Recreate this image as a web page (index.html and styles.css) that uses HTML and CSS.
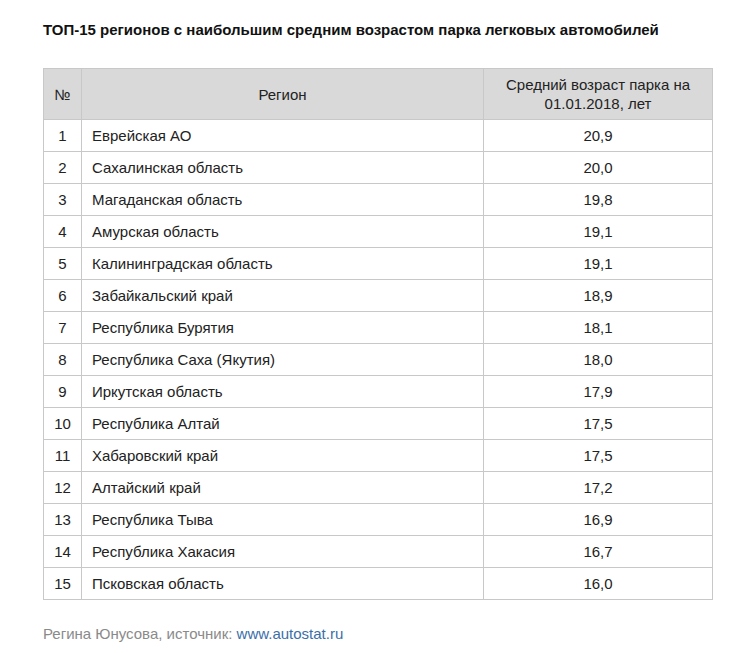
FILE: index.html
```html
<!DOCTYPE html>
<html lang="ru">
<head>
<meta charset="utf-8">
<link rel="stylesheet" href="styles.css">
</head>
<body>
<div class="page">
  <h2 class="title">ТОП-15 регионов с наибольшим средним возрастом парка легковых автомобилей</h2>
  <table class="data">
    <thead>
      <tr>
        <th class="c-num">№</th>
        <th class="c-reg">Регион</th>
        <th class="c-val">Средний возраст парка на 01.01.2018, лет</th>
      </tr>
    </thead>
    <tbody>
      <tr><td class="c-num">1</td><td class="c-reg">Еврейская АО</td><td class="c-val">20,9</td></tr>
      <tr><td class="c-num">2</td><td class="c-reg">Сахалинская область</td><td class="c-val">20,0</td></tr>
      <tr><td class="c-num">3</td><td class="c-reg">Магаданская область</td><td class="c-val">19,8</td></tr>
      <tr><td class="c-num">4</td><td class="c-reg">Амурская область</td><td class="c-val">19,1</td></tr>
      <tr><td class="c-num">5</td><td class="c-reg">Калининградская область</td><td class="c-val">19,1</td></tr>
      <tr><td class="c-num">6</td><td class="c-reg">Забайкальский край</td><td class="c-val">18,9</td></tr>
      <tr><td class="c-num">7</td><td class="c-reg">Республика Бурятия</td><td class="c-val">18,1</td></tr>
      <tr><td class="c-num">8</td><td class="c-reg">Республика Саха (Якутия)</td><td class="c-val">18,0</td></tr>
      <tr><td class="c-num">9</td><td class="c-reg">Иркутская область</td><td class="c-val">17,9</td></tr>
      <tr><td class="c-num">10</td><td class="c-reg">Республика Алтай</td><td class="c-val">17,5</td></tr>
      <tr><td class="c-num">11</td><td class="c-reg">Хабаровский край</td><td class="c-val">17,5</td></tr>
      <tr><td class="c-num">12</td><td class="c-reg">Алтайский край</td><td class="c-val">17,2</td></tr>
      <tr><td class="c-num">13</td><td class="c-reg">Республика Тыва</td><td class="c-val">16,9</td></tr>
      <tr><td class="c-num">14</td><td class="c-reg">Республика Хакасия</td><td class="c-val">16,7</td></tr>
      <tr><td class="c-num">15</td><td class="c-reg">Псковская область</td><td class="c-val">16,0</td></tr>
    </tbody>
  </table>
  <p class="source">Регина Юнусова, источник: <a href="#">www.autostat.ru</a></p>
</div>
</body>
</html>
```
FILE: styles.css
```css
html, body {
  margin: 0;
  padding: 0;
  background: #fff;
}
body {
  font-family: Arial, "Liberation Sans", sans-serif;
  color: #111;
}
.page {
  padding: 21px 28px 0 43px;
}
.title {
  margin: 0;
  font-size: 15px;
  font-weight: bold;
  line-height: 18px;
  color: #111;
}
.data {
  margin-top: 29px;
  width: 670px;
  border-collapse: collapse;
  font-size: 15px;
  color: #222;
}
.data th, .data td {
  border: 1px solid #c8c8c8;
  line-height: 19px;
}
.data th {
  background: #d9d9d9;
  font-weight: normal;
  height: 50px;
  padding: 0 10px;
  text-align: center;
}
.data td {
  height: 31px;
  padding: 0 10px;
}
.c-num {
  width: 38px;
  text-align: center;
  box-sizing: border-box;
  padding: 0 !important;
}
.c-reg {
  text-align: left;
}
.data th.c-reg {
  text-align: center;
}
.c-val {
  width: 229px;
  box-sizing: border-box;
  text-align: center;
}
.data th.c-val {
  padding: 0 18px;
}
.source {
  margin: 25px 0 0;
  font-size: 15px;
  color: #8a8a8a;
}
.source a {
  color: #3b6fa8;
  text-decoration: none;
}
```
